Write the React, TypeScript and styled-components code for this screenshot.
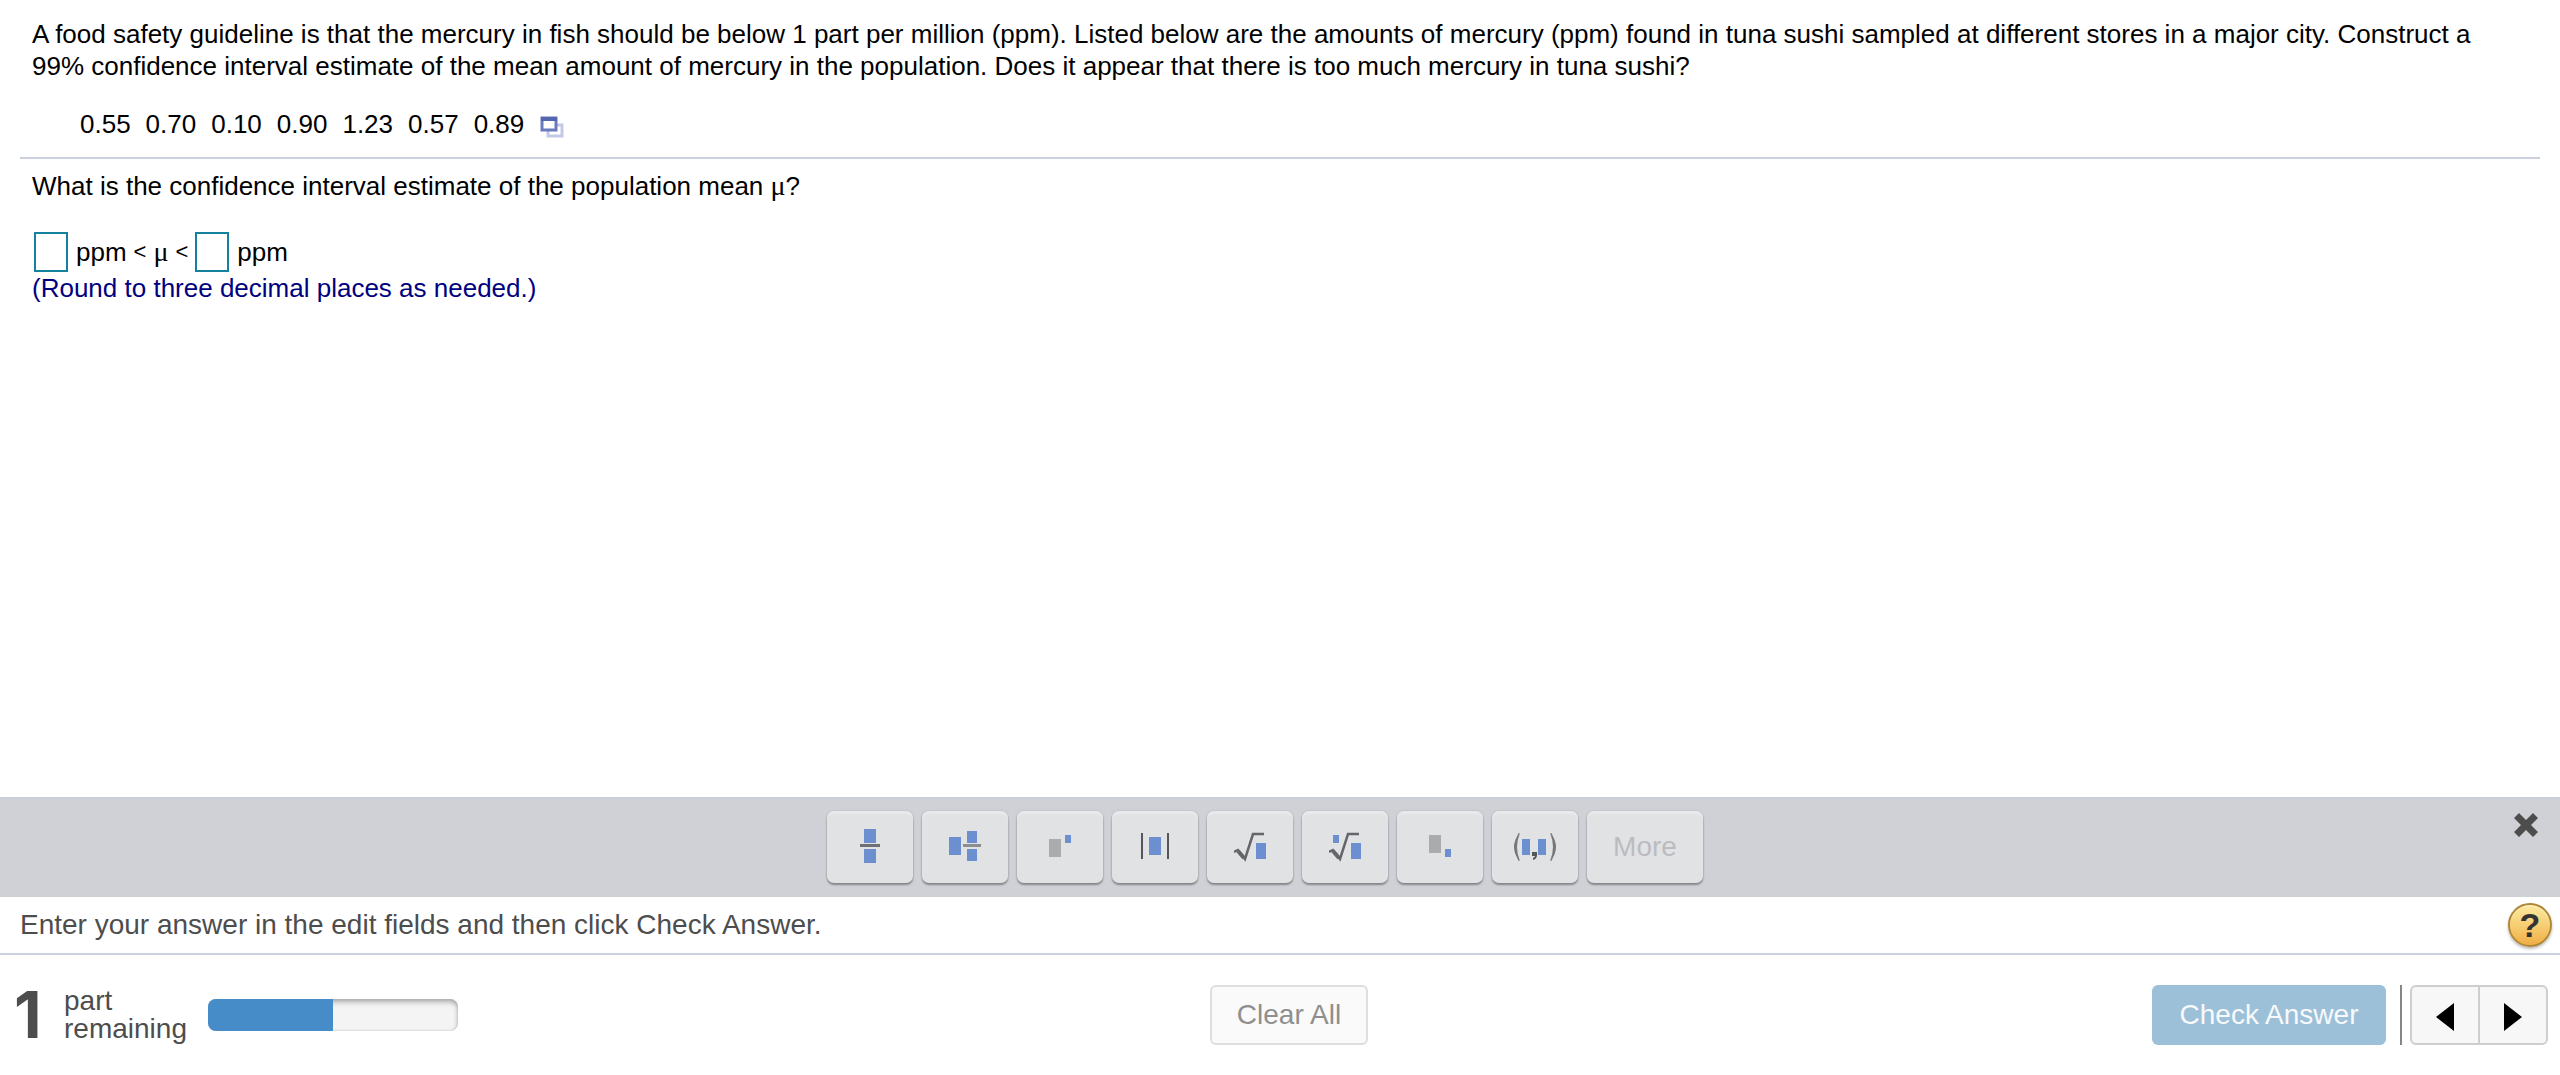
import React from "react";
import styled, { createGlobalStyle } from "styled-components";

const GlobalStyle = createGlobalStyle`
  * { box-sizing: border-box; }
  body { margin: 0; background: #fff; }
  button, input { font: inherit; margin: 0; }
`;

const Page = styled.div`
  min-height: 100vh;
  display: flex;
  flex-direction: column;
  font-family: "Liberation Sans", Arial, Helvetica, sans-serif;
  font-size: 26px;
  line-height: 32px;
  color: #000;
`;

const Exercise = styled.main`
  flex: 1;
  padding: 18px 20px 24px;
`;

const Problem = styled.section`
  padding: 0 12px 17px;
  border-bottom: 2px solid #cccfde;
`;

const Paragraph = styled.p`
  margin: 0;
`;

const Samples = styled.ul`
  display: flex;
  align-items: center;
  gap: 15px;
  list-style: none;
  margin: 26px 0 0;
  padding: 0 0 0 48px;
`;

const PopupButton = styled.button`
  display: flex;
  padding: 6px 0 0;
  border: 0;
  background: none;
`;

const Question = styled.section`
  padding: 11px 12px 0;
`;

const Interval = styled.div`
  display: flex;
  align-items: center;
  gap: 7px;
  margin-top: 30px;
  padding-left: 2px;
`;

const Label = styled.label`
  display: flex;
  align-items: center;
  gap: 8px;
`;

const AnswerBox = styled.input`
  width: 34px;
  height: 40px;
  padding: 2px;
  border: 2px solid #16809f;
  border-radius: 0;
  background: #fff;
`;

const Symbol = styled.span`
  font-family: "Liberation Serif", "Times New Roman", serif;
  font-size: 28px;
  line-height: 28px;
`;

const Less = styled.span`
  font-size: 22px;
`;

const Hint = styled.p`
  margin: 0;
  color: #000080;
`;

const Palette = styled.section`
  display: flex;
  justify-content: space-between;
  align-items: flex-start;
  height: 100px;
  padding: 12px 22px 0 52px;
  margin: 0;
  border-top: 2px solid #c9d0dc;
  background: #d0d1d7;
`;

const Tools = styled.div`
  flex: 1;
  display: flex;
  justify-content: center;
  gap: 9px;
  padding-right: 36px;
`;

const Tool = styled.button<{ $wide?: boolean }>`
  display: flex;
  align-items: center;
  justify-content: center;
  width: ${(p) => (p.$wide ? 116 : 86)}px;
  height: 72px;
  padding: 0;
  border: 0;
  border-radius: 7px;
  background: #e1e2e4;
  box-shadow: 0 2px 2px #85868a, 0 0 2px #a9aaae, inset 0 3px 2px #e8e9eb;
  color: #bbbcbf;
  font-size: 28px;
`;

const CloseButton = styled.button`
  display: flex;
  padding: 2px 0 0;
  border: 0;
  background: none;
`;

const StatusBar = styled.section`
  display: flex;
  align-items: center;
  justify-content: space-between;
  height: 58px;
  padding: 0 8px 0 20px;
  border-bottom: 2px solid #cccfde;
  color: #4d4d4d;
  font-size: 28px;
`;

const HelpButton = styled.button`
  width: 44px;
  height: 44px;
  padding: 0;
  border: 2px solid #b08737;
  border-radius: 50%;
  background: linear-gradient(#fce9a0, #f6cc70 55%, #efae45);
  box-shadow: 0 2px 3px #bbb, inset 0 1px 1px #fff3c4;
  color: #333;
  font-size: 34px;
  font-weight: bold;
  line-height: 40px;
`;

const Footer = styled.footer`
  display: grid;
  grid-template-columns: 1fr auto 1fr;
  align-items: center;
  height: 120px;
  padding: 0 12px;
  color: #4d4d4d;
  font-size: 28px;
`;

const Remaining = styled.div`
  display: flex;
  align-items: center;
`;

const Count = styled.strong`
  width: 52px;
  padding-left: 2px;
  font-family: Inter, "Liberation Sans", Arial, sans-serif;
  font-size: 64px;
  line-height: 64px;
`;

const CountLabel = styled.span`
  width: 144px;
  line-height: 28px;
`;

const Track = styled.div`
  width: 250px;
  height: 32px;
  overflow: hidden;
  border-radius: 8px;
  background: #f4f4f4;
  box-shadow: inset 0 3px 5px #aaa, inset 0 0 2px #bbb;
`;

const Fill = styled.div`
  height: 100%;
  background: #468cc8;
`;

const ClearButton = styled.button`
  width: 158px;
  height: 60px;
  margin-left: 18px;
  padding: 0;
  border: 2px solid #dedede;
  border-radius: 6px;
  background: #fafafa;
  color: #8f8f8f;
`;

const Actions = styled.div`
  display: flex;
  justify-content: flex-end;
`;

const CheckButton = styled.button`
  width: 234px;
  height: 60px;
  padding: 0;
  border: 0;
  border-radius: 6px;
  background: #9dc0d9;
  color: #f8f9fb;
`;

const Pager = styled.div`
  display: flex;
  margin-left: 14px;
  padding-left: 8px;
  border-left: 2px solid #868686;
`;

const PageButton = styled.button<{ $next?: boolean }>`
  display: flex;
  align-items: center;
  justify-content: center;
  width: 70px;
  height: 60px;
  padding: 4px 0 0;
  border: 2px solid #cecece;
  border-radius: ${(p) => (p.$next ? "0 6px 6px 0" : "6px 0 0 6px")};
  margin-left: ${(p) => (p.$next ? "-2px" : "0")};
  background: #f7f7f7;
`;

const BLUE = "#6c8fcf";
const GRAY = "#aaabad";
const INK = "#55565a";

const Glyph = ({ width = 60, children }: { width?: number; children: React.ReactNode }) => (
  <svg width={width} height="40" viewBox={`0 0 ${width} 40`} fill="none" aria-hidden="true">
    {children}
  </svg>
);

const Radical = () => (
  <>
    <path stroke="#65666a" strokeWidth="2.5" d="M0 25l4-2 7 9 8-25h11" />
    <path stroke="#65666a" strokeWidth="4" d="M4 24l6 7" />
  </>
);

const tools = [
  {
    name: "Fraction",
    icon: (
      <Glyph width={20}>
        <path fill={BLUE} d="M4 2h12v14H4zM4 22h12v14H4z" />
        <path fill="#6f7073" d="M0 17h20v3H0z" />
      </Glyph>
    ),
  },
  {
    name: "Mixed number",
    icon: (
      <Glyph width={32}>
        <path fill={BLUE} d="M0 10h12v18H0zM18 4h10v12H18zM18 22h10v12H18z" />
        <path fill="#8d8e92" d="M14 17h18v3H14z" />
      </Glyph>
    ),
  },
  {
    name: "Exponent",
    icon: (
      <Glyph width={22}>
        <path fill={GRAY} d="M0 12h12v18H0z" />
        <path fill={BLUE} d="M16 8h6v8h-6z" />
      </Glyph>
    ),
  },
  {
    name: "Absolute value",
    icon: (
      <Glyph width={28}>
        <path fill={INK} d="M0 6h2v26H0zM26 6h2v26h-2z" />
        <path fill={BLUE} d="M8 10h12v18H8z" />
      </Glyph>
    ),
  },
  {
    name: "Square root",
    icon: (
      <Glyph width={32}>
        <Radical />
        <path fill={BLUE} d="M22 16h10v16H22z" />
      </Glyph>
    ),
  },
  {
    name: "Root",
    icon: (
      <Glyph width={32}>
        <Radical />
        <path fill={BLUE} d="M22 16h10v16H22zM4 8h6v8H4z" />
      </Glyph>
    ),
  },
  {
    name: "Subscript",
    icon: (
      <Glyph width={22}>
        <path fill={GRAY} d="M0 8h12v18H0z" />
        <path fill={BLUE} d="M16 22h6v8h-6z" />
      </Glyph>
    ),
  },
  {
    name: "Ordered pair",
    icon: (
      <Glyph width={42}>
        <path fill="#77787b" d="M6 6Q-6 20 6 34Q0 20 6 6zM36 6Q48 20 36 34Q42 20 36 6z" />
        <path stroke="#77787b" d="M5 6Q-3 20 5 34M37 6Q45 20 37 34" />
        <path fill={BLUE} d="M8 12h8v16H8zM24 12h8v16h-8z" />
        <path fill={INK} d="M18 25h5v3q0 4-4 5v-2q2-1 2-2h-3z" />
      </Glyph>
    ),
  },
];

const samples = ["0.55", "0.70", "0.10", "0.90", "1.23", "0.57", "0.89"];

export default function App() {
  const partsDone = 1;
  const partsTotal = 2;

  return (
    <Page>
      <GlobalStyle />
      <Exercise>
        <Problem>
          <Paragraph>
            A food safety guideline is that the mercury in fish should be below 1 part per million (ppm). Listed below
            are the amounts of mercury (ppm) found in tuna sushi sampled at different stores in a major city. Construct
            a 99% confidence interval estimate of the mean amount of mercury in the population. Does it appear that
            there is too much mercury in tuna sushi?
          </Paragraph>
          <Samples>
            {samples.map((value) => (
              <li key={value}>{value}</li>
            ))}
            <li>
              <PopupButton type="button" aria-label="Open data">
                <svg width="26" height="22" viewBox="0 0 26 22" fill="none">
                  <path stroke="#c3c9e5" strokeWidth="3" d="M9 9h14v11H9z" />
                  <path fill="#fff" stroke="#6b7abf" strokeWidth="3" d="M3 2h14v12H3z" />
                  <path fill="#5566b0" d="M2 1h16v4H2z" />
                </svg>
              </PopupButton>
            </li>
          </Samples>
        </Problem>
        <Question>
          <Paragraph>
            What is the confidence interval estimate of the population mean <Symbol>μ</Symbol>?
          </Paragraph>
          <Interval>
            <Label>
              <AnswerBox type="text" aria-label="Lower limit" />
              ppm
            </Label>
            <Less>&lt;</Less>
            <Symbol>μ</Symbol>
            <Less>&lt;</Less>
            <Label>
              <AnswerBox type="text" aria-label="Upper limit" />
              ppm
            </Label>
          </Interval>
          <Hint>(Round to three decimal places as needed.)</Hint>
        </Question>
      </Exercise>

      <Palette aria-label="Math palette">
        <Tools>
          {tools.map((tool) => (
            <Tool key={tool.name} type="button" aria-label={tool.name}>
              {tool.icon}
            </Tool>
          ))}
          <Tool type="button" $wide>
            More
          </Tool>
        </Tools>
        <CloseButton type="button" aria-label="Close palette">
          <svg width="24" height="24" viewBox="0 0 24 24">
            <path
              fill="#4d4d4d"
              d="M5 0l7 7 7-7 5 5-7 7 7 7-5 5-7-7-7 7-5-5 7-7-7-7z"
            />
          </svg>
        </CloseButton>
      </Palette>

      <StatusBar>
        <span>Enter your answer in the edit fields and then click Check Answer.</span>
        <HelpButton type="button" aria-label="Help">
          ?
        </HelpButton>
      </StatusBar>

      <Footer>
        <Remaining>
          <Count>1</Count>
          <CountLabel>
            part
            <br />
            remaining
          </CountLabel>
          <Track role="progressbar" aria-label="Progress" aria-valuenow={partsDone} aria-valuemax={partsTotal}>
            <Fill style={{ width: `${(partsDone / partsTotal) * 100}%` }} />
          </Track>
        </Remaining>
        <ClearButton type="button">Clear All</ClearButton>
        <Actions>
          <CheckButton type="button">Check Answer</CheckButton>
          <Pager>
            <PageButton type="button" aria-label="Previous">
              <svg width="18" height="28" viewBox="0 0 18 28">
                <path d="M18 0v28L0 14z" />
              </svg>
            </PageButton>
            <PageButton type="button" aria-label="Next" $next>
              <svg width="18" height="28" viewBox="0 0 18 28">
                <path d="M0 0v28l18-14z" />
              </svg>
            </PageButton>
          </Pager>
        </Actions>
      </Footer>
    </Page>
  );
}
